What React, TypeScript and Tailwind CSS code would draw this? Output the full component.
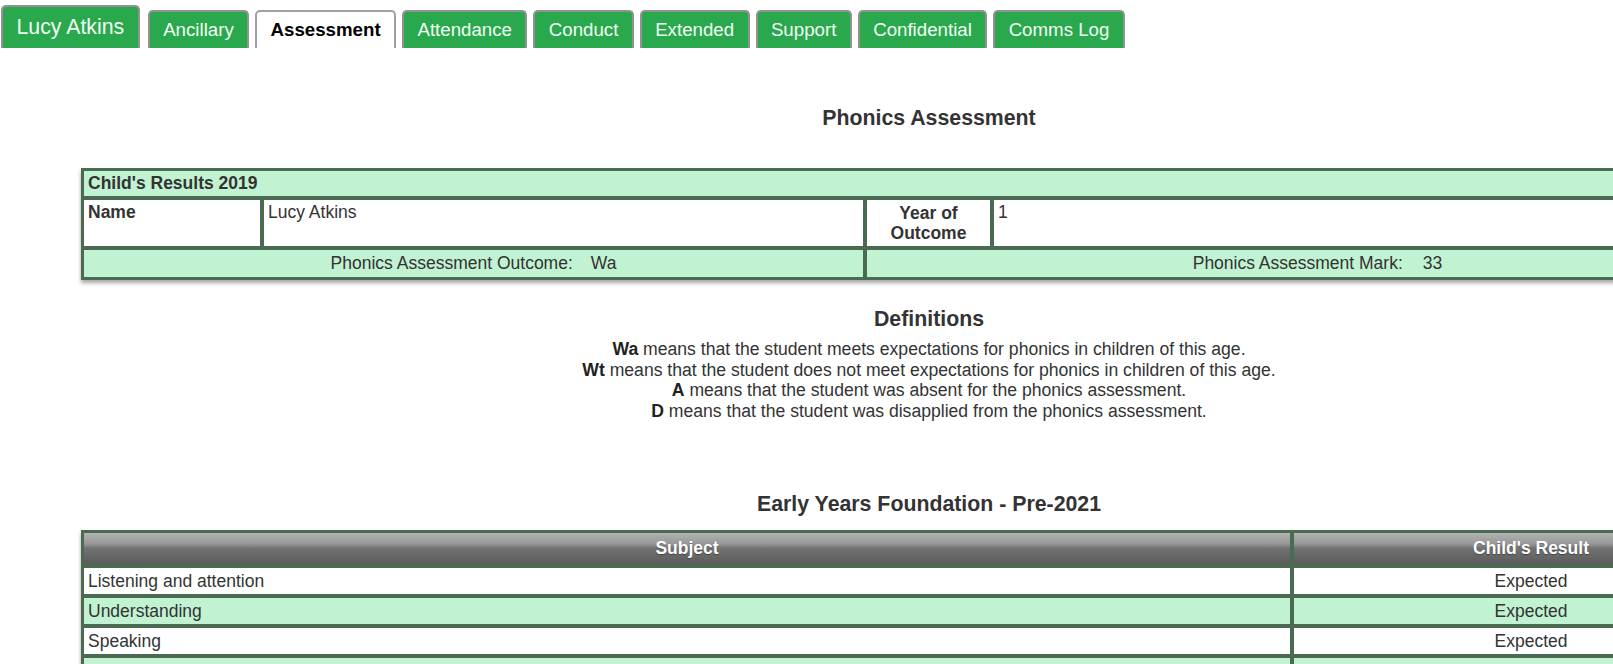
import React from 'react';

const tabs = ['Ancillary', 'Assessment', 'Attendance', 'Conduct', 'Extended', 'Support', 'Confidential', 'Comms Log'];

const eyfs = [
  { subject: 'Listening and attention', result: 'Expected' },
  { subject: 'Understanding', result: 'Expected' },
  { subject: 'Speaking', result: 'Expected' },
  { subject: 'Moving and handling', result: 'Expected' },
  { subject: 'Health and self-care', result: 'Expected' },
  { subject: 'Self-confidence and self-awareness', result: 'Expected' },
];

const definitions = [
  { code: 'Wa', text: 'means that the student meets expectations for phonics in children of this age.' },
  { code: 'Wt', text: 'means that the student does not meet expectations for phonics in children of this age.' },
  { code: 'A', text: 'means that the student was absent for the phonics assessment.' },
  { code: 'D', text: 'means that the student was disapplied from the phonics assessment.' },
];

export default function App() {
  return (
    <div className="h-[664px] w-full overflow-hidden bg-white font-['Liberation_Sans',Arial,sans-serif] text-[#333]">
      <div className="w-[1858px]">
        {/* Tab strip */}
        <nav className="flex h-[48px] items-end pl-[1px]">
          <div className="mr-[8px] flex h-[43px] items-center rounded-t-[5px] border-2 border-b-0 border-[#929292] bg-[#29a84e] px-[13.5px] text-[21.3px] text-[#f3fff3]">
            Lucy Atkins
          </div>
          {tabs.map(tab =>
            tab === 'Assessment' ? (
              <div
                key={tab}
                className="mr-[6px] flex h-[38px] items-center rounded-t-[5px] border-2 border-b-0 border-[#a0a0a0] bg-white px-[13.4px] text-[18.7px] font-bold text-black"
              >
                {tab}
              </div>
            ) : (
              <div
                key={tab}
                className="mr-[6px] flex h-[38px] items-center rounded-t-[5px] border-2 border-b-0 border-[#929292] bg-[#29a84e] px-[13.4px] text-[18.7px] text-[#f3fff3]"
              >
                {tab}
              </div>
            )
          )}
        </nav>

        <h2 className="mt-[57px] text-center text-[21.3px] font-bold leading-[26px]">Phonics Assessment</h2>

        {/* Child's results */}
        <table className="ml-[81px] mt-[37px] w-[1690px] table-fixed border-separate border-spacing-0 border border-[#4a6b52] text-[17.5px] shadow-[0_3px_4px_rgba(0,0,0,0.35)]">
          <colgroup>
            <col className="w-[180px]" />
            <col className="w-[603px]" />
            <col className="w-[127px]" />
            <col />
          </colgroup>
          <tbody>
            <tr>
              <td colSpan={4} className="border-2 border-[#4a6b52] bg-[#c1f2d1] px-1 py-[3px] font-bold leading-[19px]">
                Child's Results 2019
              </td>
            </tr>
            <tr>
              <td className="border-2 border-[#4a6b52] px-1 py-[3px] align-top font-bold leading-[19px]">Name</td>
              <td className="border-2 border-[#4a6b52] px-1 py-[3px] align-top leading-[19px]">Lucy Atkins</td>
              <td className="border-2 border-[#4a6b52] px-1 py-[3px] text-center font-bold leading-[20px]">
                Year of
                <br />
                Outcome
              </td>
              <td className="border-2 border-[#4a6b52] px-1 py-[3px] align-top leading-[19px]">1</td>
            </tr>
            <tr>
              <td colSpan={2} className="border-2 border-[#4a6b52] bg-[#c1f2d1] px-1 py-[4px] text-center leading-[19px]">
                Phonics Assessment Outcome:<span className="pl-[18px]">Wa</span>
              </td>
              <td colSpan={2} className="border-2 border-[#4a6b52] bg-[#c1f2d1] px-1 py-[4px] text-center leading-[19px]">
                Phonics Assessment Mark:<span className="pl-[20px]">33</span>
              </td>
            </tr>
          </tbody>
        </table>

        <h2 className="mt-[26px] text-center text-[21.3px] font-bold leading-[26px]">Definitions</h2>
        <div className="mt-[7px] text-center text-[17.6px] leading-[20.5px]">
          {definitions.map(d => (
            <p key={d.code}>
              <b className="text-[#222]">{d.code}</b> {d.text}
            </p>
          ))}
        </div>

        <h2 className="mt-[70px] text-center text-[21.3px] font-bold leading-[26px]">Early Years Foundation - Pre-2021</h2>

        {/* EYFS results */}
        <table className="ml-[81px] mt-[13px] w-[1690px] table-fixed border-separate border-spacing-0 border border-[#4a6b52] text-[17.5px] shadow-[0_3px_4px_rgba(0,0,0,0.35)]">
          <colgroup>
            <col className="w-[1210px]" />
            <col />
          </colgroup>
          <thead>
            <tr>
              <th className="border-2 border-[#4a6b52] bg-[linear-gradient(to_bottom,#b2b2b2,#979797_35%,#717171_50%,#5c5c5c)] px-1 py-[6px] text-center font-bold leading-[19px] text-white [text-shadow:0_1px_1px_rgba(0,0,0,0.35)]">
                Subject
              </th>
              <th className="border-2 border-[#4a6b52] bg-[linear-gradient(to_bottom,#b2b2b2,#979797_35%,#717171_50%,#5c5c5c)] px-1 py-[6px] text-center font-bold leading-[19px] text-white [text-shadow:0_1px_1px_rgba(0,0,0,0.35)]">
                Child's Result
              </th>
            </tr>
          </thead>
          <tbody>
            {eyfs.map((row, i) => (
              <tr key={row.subject} className={i % 2 === 1 ? 'bg-[#c1f2d1]' : 'bg-white'}>
                <td className="border-2 border-[#4a6b52] px-1 py-[3px] leading-[20px]">{row.subject}</td>
                <td className="border-2 border-[#4a6b52] px-1 py-[3px] text-center leading-[20px]">{row.result}</td>
              </tr>
            ))}
          </tbody>
        </table>
      </div>
    </div>
  );
}
